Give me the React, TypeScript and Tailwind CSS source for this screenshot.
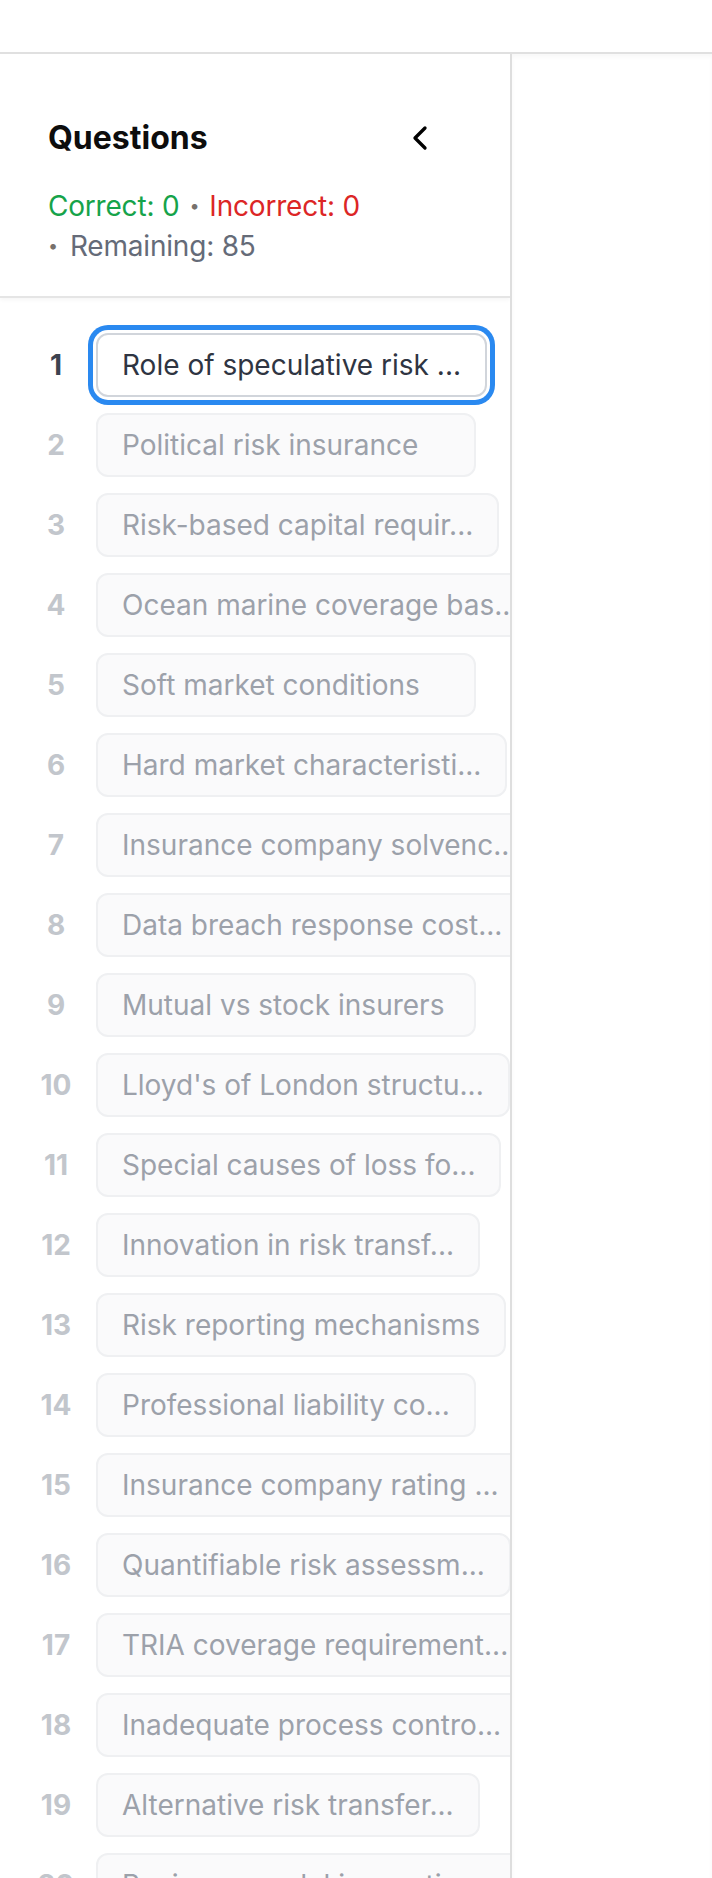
import { ChevronLeft } from 'lucide-react';

const questions = [
  'Role of speculative risk ...',
  'Political risk insurance',
  'Risk-based capital requir...',
  'Ocean marine coverage bas...',
  'Soft market conditions',
  'Hard market characteristi...',
  'Insurance company solvenc...',
  'Data breach response cost...',
  'Mutual vs stock insurers',
  "Lloyd's of London structu...",
  'Special causes of loss fo...',
  'Innovation in risk transf...',
  'Risk reporting mechanisms',
  'Professional liability co...',
  'Insurance company rating ...',
  'Quantifiable risk assessm...',
  'TRIA coverage requirement...',
  'Inadequate process contro...',
  'Alternative risk transfer...',
  'Business model innovation...',
];

function QuestionRow({ index, label, active }: Readonly<{ index: number; label: string; active: boolean }>) {
  return (
    <div className="flex items-center gap-2">
      <span
        className={`w-16 shrink-0 text-center text-[28px] leading-10 font-bold ${active ? 'text-[#3c4250]' : 'text-[#c2c6cc]'}`}
      >
        {index + 1}
      </span>
      <button
        className={
          active
            ? 'shrink-0 min-w-[380px] whitespace-nowrap text-left rounded-xl border-2 border-[#d1d5db] bg-white px-6 py-[10px] text-[28px] leading-10 text-[#2f3542] ring-[5px] ring-[#2a89f0] ring-offset-[3px] ring-offset-white'
            : 'shrink-0 min-w-[380px] whitespace-nowrap text-left rounded-xl border-2 border-[#eff0f2] bg-[#fafafb] px-6 py-[10px] text-[28px] leading-10 text-[#9ca1aa]'
        }
      >
        {label}
      </button>
    </div>
  );
}

export default function App() {
  return (
    <div className="flex h-screen flex-col overflow-hidden bg-white font-['Inter','Noto_Sans',sans-serif]">
      <header className="h-[54px] shrink-0 border-b-2 border-[#e0e0e0] bg-white" />
      <div className="flex min-h-0 flex-1">
        <aside className="relative z-10 flex w-[512px] shrink-0 flex-col overflow-hidden border-r-2 border-[#dedede] bg-white">
          <div className="shrink-0 border-b-2 border-[#e5e5e5] pl-12 pr-[54px] pt-12 pb-[30px] shadow-[0_2px_4px_rgba(0,0,0,0.04)]">
            <div className="flex items-center justify-between">
              <h2 className="text-[32px] leading-[48px] font-bold text-[#0d0d0d]">Questions</h2>
              <button className="p-4 text-black" aria-label="Collapse">
                <ChevronLeft size={40} strokeWidth={2} />
              </button>
            </div>
            <div className="mt-3 flex flex-wrap items-center gap-x-[10px] text-[28px] leading-10 tracking-[-0.2px]">
              <span className="text-[#16a34a]">Correct: 0</span>
              <span className="text-[18px] text-[#77716c]">•</span>
              <span className="text-[#dc2626]">Incorrect: 0</span>
              <span className="flex items-center gap-[12px]">
                <span className="text-[18px] text-[#77716c]">•</span>
                <span className="text-[#656b78]">Remaining: 85</span>
              </span>
            </div>
          </div>
          <div className="flex flex-col gap-4 pl-6 pt-[35px]">
            {questions.map((q, i) => (
              <QuestionRow key={q} index={i} label={q} active={i === 0} />
            ))}
          </div>
        </aside>
        <main className="flex-1 bg-white shadow-[inset_0_3px_4px_rgba(0,0,0,0.03)]" />
      </div>
    </div>
  );
}
